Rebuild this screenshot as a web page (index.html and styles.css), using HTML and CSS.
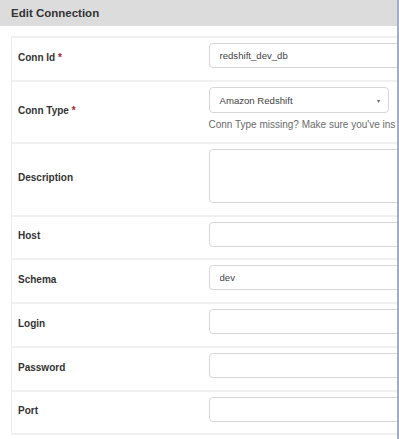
FILE: index.html
```html
<!DOCTYPE html>
<html lang="en">
<head>
    <meta charset="utf-8" />
    <title>Edit Connection</title>
    <link rel="stylesheet" href="styles.css">
</head>
<body>
    <div class="panel">
        <div class="panel-heading">Edit Connection</div>

        <table class="form-table">
            <tr class="row-id">
                <th>Conn Id <span class="required">*</span></th>
                <td><input class="field" type="text" value="redshift_dev_db"></td>
            </tr>
            <tr class="row-type">
                <th>Conn Type <span class="required">*</span></th>
                <td>
                    <div class="select">
                        <span>Amazon Redshift</span>
                        <span class="caret">&#9662;</span>
                    </div>
                    <p class="help">Conn Type missing? Make sure you've ins</p>
                </td>
            </tr>
            <tr class="row-desc">
                <th>Description</th>
                <td><textarea class="field area"></textarea></td>
            </tr>
            <tr class="row-host">
                <th>Host</th>
                <td><input class="field" type="text"></td>
            </tr>
            <tr class="row-schema">
                <th>Schema</th>
                <td><input class="field" type="text" value="dev"></td>
            </tr>
            <tr class="row-login">
                <th>Login</th>
                <td><input class="field" type="text"></td>
            </tr>
            <tr class="row-password">
                <th>Password</th>
                <td><input class="field" type="password"></td>
            </tr>
            <tr class="row-port">
                <th>Port</th>
                <td><input class="field" type="text"></td>
            </tr>
        </table>
    </div>
</body>
</html>
```

FILE: styles.css
```css
* {
    margin: 0;
    padding: 0;
    box-sizing: border-box;
}

body {
    font-family: "Liberation Sans", Arial, sans-serif;
    background: #fff;
    color: #333;
}

.panel {
    width: 399px;
    height: 439px;
    overflow: hidden;
    border-right: 2px solid #a4adc6;
}

.panel-heading {
    height: 26px;
    line-height: 26px;
    padding-left: 11px;
    background: #dcdcdc;
    font-size: 11.5px;
    font-weight: bold;
    color: #333;
}

.form-table {
    margin: 10px 0 0 11px;
    border-collapse: collapse;
    table-layout: fixed;
    width: 520px;
    border-left: 1px solid #ececec;
}

.form-table tr {
    border-top: 2px solid #f0f0f0;
    border-bottom: 2px solid #f0f0f0;
}

.form-table th {
    width: 197px;
    padding: 0 0 4px 6px;
    text-align: left;
    vertical-align: middle;
    font-size: 10px;
    font-weight: bold;
    color: #333;
}

.form-table td {
    vertical-align: top;
    padding-top: 5px;
}

.required {
    color: #b0202a;
}

.row-id { height: 44px; }
.row-type { height: 62px; }
.row-desc { height: 73px; }
.row-host { height: 43px; }
.row-schema { height: 44px; }
.row-login { height: 44px; }
.row-password { height: 44px; }
.row-port { height: 43px; }

.field {
    display: block;
    width: 300px;
    height: 25px;
    padding: 0 10px;
    border: 1px solid #d6d6d6;
    border-radius: 4px;
    font-family: "Liberation Sans", Arial, sans-serif;
    font-size: 9.6px;
    color: #444;
    background: #fff;
}

.area {
    height: 54px;
    resize: none;
}

.select {
    display: flex;
    align-items: center;
    justify-content: space-between;
    width: 180px;
    height: 26px;
    padding: 0 8px 0 10px;
    border: 1px solid #d6d6d6;
    border-radius: 4px;
    font-size: 9.6px;
    color: #444;
}

.caret {
    font-size: 6px;
    color: #666;
}

.help {
    margin-top: 6px;
    font-size: 10px;
    color: #6a6a6a;
    white-space: nowrap;
}
```
